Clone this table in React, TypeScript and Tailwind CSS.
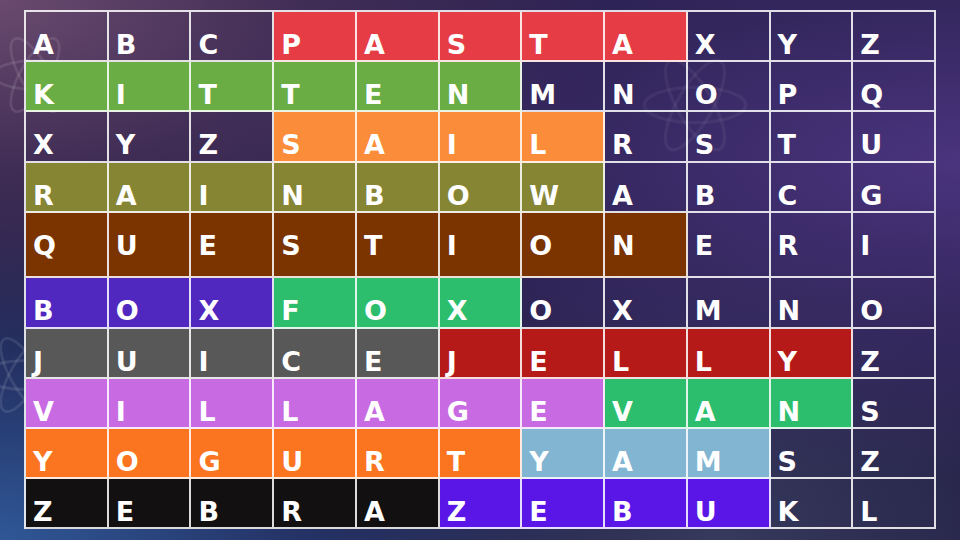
const rows: { h: string; segs: [string, string | null][] }[] = [
  { h: "h-[50px]", segs: [["ABC", null], ["PASTA", "bg-[#e63c45]"], ["XYZ", null]] },
  { h: "h-[50px]", segs: [["KITTEN", "bg-[#6aad45]"], ["MNOPQ", null]] },
  { h: "h-[51px]", segs: [["XYZ", null], ["SAIL", "bg-[#fb8d3a]"], ["RSTU", null]] },
  { h: "h-[50px]", segs: [["RAINBOW", "bg-[#868534]"], ["ABCG", null]] },
  { h: "h-[65px]", segs: [["QUESTION", "bg-[#7b3300]"], ["ERI", null]] },
  { h: "h-[51px]", segs: [["BOX", "bg-[#5028bf]"], ["FOX", "bg-[#2cbe6c]"], ["OXMNO", null]] },
  { h: "h-[50px]", segs: [["JUICE", "bg-[#585858]"], ["JELLY", "bg-[#b51a18]"], ["Z", null]] },
  { h: "h-[50px]", segs: [["VILLAGE", "bg-[#c86be3]"], ["VAN", "bg-[#2cbe6c]"], ["S", null]] },
  { h: "h-[50px]", segs: [["YOGURT", "bg-[#fb7420]"], ["YAM", "bg-[#82b5d1]"], ["SZ", null]] },
  { h: "h-[50px]", segs: [["ZEBRA", "bg-[#121010]"], ["ZEBU", "bg-[#5a16e6]"], ["KL", null]] },
];

const Atom = ({ className }: { className: string }) => (
  <svg viewBox="0 0 100 100" className={className} fill="none" stroke="currentColor" strokeWidth="3">
    <ellipse cx="50" cy="50" rx="46" ry="16" />
    <ellipse cx="50" cy="50" rx="46" ry="16" transform="rotate(60 50 50)" />
    <ellipse cx="50" cy="50" rx="46" ry="16" transform="rotate(-60 50 50)" />
  </svg>
);

const App = () => {
  return (
    <div className="relative w-[960px] h-[540px] overflow-hidden bg-[#211b43] bg-[radial-gradient(ellipse_at_0%_0%,#6a4a6e_0%,rgba(90,60,100,0.55)_22%,transparent_45%),radial-gradient(ellipse_at_0%_100%,#2f5796_0%,rgba(40,70,130,0.55)_22%,transparent_45%),radial-gradient(ellipse_at_100%_30%,#4a347e_0%,rgba(70,50,120,0.5)_30%,transparent_60%),radial-gradient(ellipse_at_75%_100%,#363a5c_0%,transparent_40%)]">
      {/* faint watermark atoms */}
      <Atom className="absolute left-[-10px] top-[30px] w-[90px] h-[90px] text-white/10" />
      <Atom className="absolute left-[-20px] top-[330px] w-[90px] h-[90px] text-white/10" />
      <Atom className="absolute left-[640px] top-[50px] w-[110px] h-[110px] text-white/5" />
      <div className="relative pt-[10px] pl-[24px]">
        <div className="w-[912px] border-l-2 border-t-2 border-white/85 font-['DejaVu_Sans',sans-serif] font-bold text-[27px] leading-none text-white">
          {rows.map((row, ri) => (
            <div key={ri} className={`grid grid-cols-11 ${row.h}`}>
              {row.segs.flatMap(([letters, bg], si) =>
                letters.split("").map((ch, ci) => (
                  <div
                    key={`${si}-${ci}`}
                    className={`border-r-2 border-b-2 border-white/85 pl-[7px] pt-[19px] ${bg ?? ""}`}
                  >
                    {ch}
                  </div>
                ))
              )}
            </div>
          ))}
        </div>
      </div>
    </div>
  );
};

export default App;
